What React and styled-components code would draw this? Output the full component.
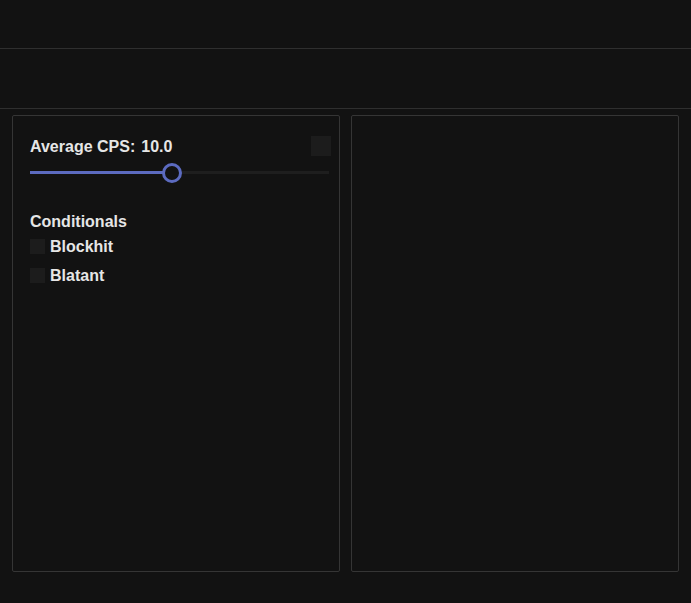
import React, { useState } from 'react';
import styled, { createGlobalStyle } from 'styled-components';

const GlobalStyle = createGlobalStyle`
  html, body {
    margin: 0;
    padding: 0;
    background: #121212;
  }
  body {
    font-family: "Liberation Sans", Arial, sans-serif;
    color: #e6e6e6;
  }
`;

const Page = styled.div`
  height: 603px;
  display: flex;
  flex-direction: column;
  background: #121212;
`;

const Header = styled.div`
  height: 48px;
  border-bottom: 1px solid #2f2f2f;
`;

const Toolbar = styled.div`
  height: 59px;
  border-bottom: 1px solid #2f2f2f;
`;

const Content = styled.div`
  display: flex;
  gap: 11px;
  padding: 6px 12px 0 12px;
`;

const Panel = styled.div`
  width: 326px;
  height: 455px;
  border: 1px solid #353535;
  border-radius: 2px;
  box-sizing: content-box;
`;

const PanelBody = styled.div`
  padding: 20px 8px 0 17px;
`;

const SettingHead = styled.div`
  display: flex;
  align-items: center;
  justify-content: space-between;
  height: 20px;
`;

const Label = styled.div`
  font-size: 16px;
  line-height: 18px;
  font-weight: bold;
  display: flex;
  gap: 6px;
  padding-top: 2px;
`;

const Square = styled.div`
  width: 20px;
  height: 20px;
  background: #1c1c1c;
`;

const SliderWrap = styled.div`
  position: relative;
  height: 20px;
  margin-top: 7px;
  margin-right: 2px;
`;

const Track = styled.div`
  position: absolute;
  left: 0;
  right: 0;
  top: 8px;
  height: 3px;
  background: #1e1e1e;
`;

const Fill = styled.div`
  position: absolute;
  left: 0;
  top: 8px;
  height: 3px;
  background: #5c6bc0;
`;

const Thumb = styled.div`
  position: absolute;
  top: 0;
  width: 14px;
  height: 14px;
  margin-left: -10px;
  border: 3px solid #5c6bc0;
  border-radius: 50%;
  background: #121212;
`;

const SectionTitle = styled.div`
  font-size: 16px;
  font-weight: bold;
  margin-top: 30px;
`;

const CheckRow = styled.label`
  display: flex;
  align-items: center;
  gap: 5px;
  font-size: 16px;
  font-weight: bold;
  margin-top: ${p => p.$first ? '7px' : '12px'};
  height: 17px;
`;

const Box = styled.span`
  width: 15px;
  height: 15px;
  background: #1c1c1c;
`;

export default function App() {
  const [cps] = useState(10.0);
  const pct = 47.6;
  return (
    <>
      <GlobalStyle />
      <Page>
        <Header />
        <Toolbar />
        <Content>
          <Panel>
            <PanelBody>
              <SettingHead>
                <Label>
                  <span>Average CPS:</span>
                  <span>{cps.toFixed(1)}</span>
                </Label>
                <Square />
              </SettingHead>
              <SliderWrap>
                <Track />
                <Fill style={{ width: pct + '%' }} />
                <Thumb style={{ left: pct + '%' }} />
              </SliderWrap>
              <SectionTitle>Conditionals</SectionTitle>
              <CheckRow $first>
                <Box />
                Blockhit
              </CheckRow>
              <CheckRow>
                <Box />
                Blatant
              </CheckRow>
            </PanelBody>
          </Panel>
          <Panel />
        </Content>
      </Page>
    </>
  );
}
